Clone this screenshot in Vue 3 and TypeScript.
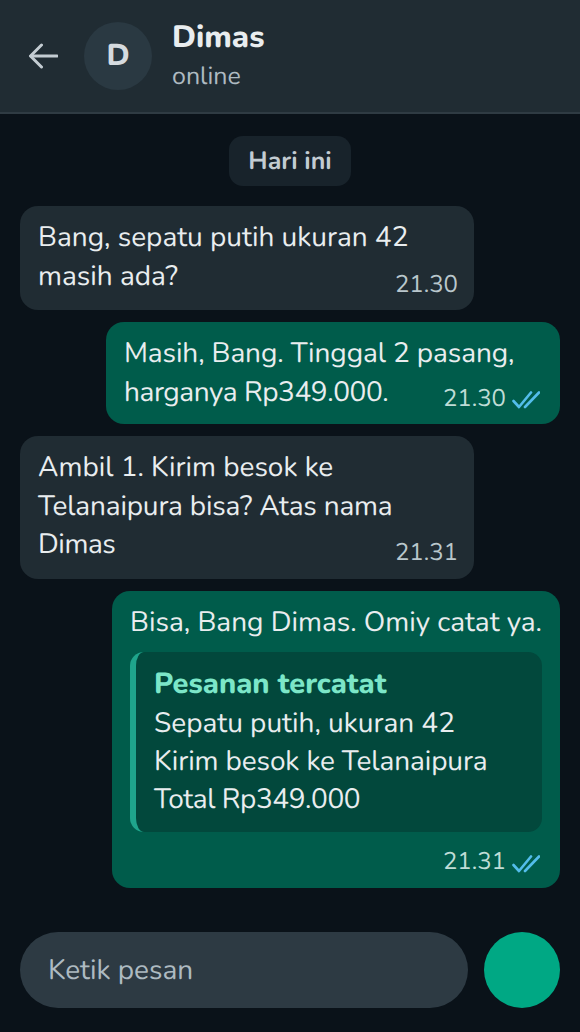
<script setup lang="ts">
const orderLines = [
  { text: 'Sepatu putih, ukuran 42', fit: '' },
  { text: 'Kirim besok ke Telanaipura', fit: 'fit-s' },
  { text: 'Total Rp349.000', fit: 'fit-l' },
];
</script>

<template>
  <div class="screen">
    <header class="topbar">
      <svg class="back" width="30" height="26" viewBox="0 0 30 26" fill="none" stroke="#c3ccd2" stroke-width="3" stroke-linecap="round" stroke-linejoin="round">
        <path d="M29 13H3" />
        <path d="M13.500 2 2.500 13l11 11" />
      </svg>
      <div class="avatar">D</div>
      <div class="who">
        <div class="name">Dimas</div>
        <div class="status">online</div>
      </div>
    </header>

    <main class="chat">
      <div class="date">Hari ini</div>

      <div class="bubble in">
        Bang, sepatu putih ukuran 42 masih ada?
        <span class="time">21.30</span>
      </div>

      <div class="bubble out">
        <span class="fit-s">Masih, Bang. Tinggal 2 pasang,</span> <span class="fit-l">harganya Rp349.000.</span>
        <span class="time">
          21.30
          <svg class="ticks" width="28" height="20" viewBox="0 0 28 20" fill="none" stroke="#53bdeb" stroke-width="2.600" stroke-linecap="round" stroke-linejoin="round">
            <path d="M1.500 11l5.500 6L19 2.500" />
            <path d="M13 17 27 2.500" />
          </svg>
        </span>
      </div>

      <div class="bubble in">
        Ambil 1. Kirim besok ke <span class="fit-m">Telanaipura bisa? Atas nama</span> <span class="fit-l">Dimas</span>
        <span class="time">21.31</span>
      </div>

      <div class="bubble out order">
        <div>Bisa, Bang Dimas. Omiy catat ya.</div>
        <div class="card">
          <div class="card-title">Pesanan tercatat</div>
          <div v-for="line in orderLines" :key="line.text" :class="line.fit">{{ line.text }}</div>
        </div>
        <div class="order-meta">
          <span class="time">
            21.31
            <svg class="ticks" width="28" height="20" viewBox="0 0 28 20" fill="none" stroke="#53bdeb" stroke-width="2.600" stroke-linecap="round" stroke-linejoin="round">
              <path d="M1.500 11l5.500 6L19 2.500" />
              <path d="M13 17 27 2.500" />
            </svg>
          </span>
        </div>
      </div>
    </main>

    <footer class="composer">
      <div class="field">Ketik pesan</div>
      <div class="send"></div>
    </footer>
  </div>
</template>

<style scoped>
.screen {
  width: 580px;
  height: 1032px;
  display: flex;
  flex-direction: column;
  background: #0a1219;
  color: #e9edef;
  font-family: Nunito, Lato, "Noto Sans", sans-serif;
  font-size: 28px;
  line-height: 38.600px;
  text-rendering: geometricPrecision;
  overflow: hidden;
}

.fit-s {
  letter-spacing: -0.100px;
}

.fit-m {
  letter-spacing: -0.180px;
}

.fit-l {
  letter-spacing: -0.430px;
}

.topbar {
  height: 114px;
  box-sizing: border-box;
  flex-shrink: 0;
  display: flex;
  align-items: center;
  padding: 0 20px 0 28px;
  background: #202c33;
  border-bottom: 2px solid #2f3b43;
}

.back {
  margin-right: 26px;
}

.avatar {
  width: 68px;
  height: 68px;
  border-radius: 50%;
  background: #2a3942;
  color: #d5dbdf;
  display: flex;
  align-items: center;
  justify-content: center;
  font-size: 30px;
  font-weight: 800;
  margin-right: 20px;
}

.name {
  font-size: 31px;
  font-weight: 800;
  line-height: 40px;
}

.status {
  font-size: 25px;
  line-height: 38px;
  color: #aebac1;
}

.chat {
  flex: 1;
  display: flex;
  flex-direction: column;
  align-items: flex-start;
  padding: 22px 20px 0;
}

.date {
  align-self: center;
  height: 50px;
  padding: 0 19px;
  border-radius: 14px;
  background: #18232b;
  color: #c3ccd2;
  font-size: 25px;
  font-weight: 700;
  line-height: 50px;
  margin-bottom: 20px;
}

.bubble {
  display: flow-root;
  box-sizing: border-box;
  width: 454px;
  padding: 12px 18px 11.500px;
  border-radius: 18px;
  margin-bottom: 12px;
}

.in {
  background: #202c33;
}

.out {
  align-self: flex-end;
  background: #005c4b;
}

.time {
  float: right;
  display: flex;
  align-items: center;
  gap: 6px;
  margin-top: 14px;
  margin-left: 10px;
  height: 28px;
  font-size: 24px;
  line-height: 28px;
  color: #b9c7cc;
}

.in .time {
  margin-right: -2px;
}

.out .time {
  margin-top: 12px;
  color: #bfdcd6;
}

.ticks {
  margin-top: 3px;
  margin-right: 2px;
}

.order {
  width: fit-content;
  white-space: nowrap;
  padding-bottom: 12px;
}

.card {
  margin-top: 11px;
  padding: 13px 18px 14px;
  background: #02483c;
  border-left: 6px solid #1fa58c;
  border-radius: 14px;
  line-height: 38px;
}

.card-title {
  color: #7ce6c8;
  font-size: 29px;
  font-weight: 800;
  line-height: 39px;
}

.order-meta {
  display: flex;
  justify-content: flex-end;
}

.order-meta .time {
  float: none;
  margin: 16px 0 0;
}

.composer {
  display: flex;
  gap: 16px;
  padding: 0 20px 24px;
}

.field {
  flex: 1;
  height: 76px;
  padding: 0 28px;
  border-radius: 38px;
  background: #2d3a43;
  color: #aebac1;
  line-height: 76px;
}

.send {
  width: 76px;
  height: 76px;
  border-radius: 50%;
  background: #00a884;
}
</style>
